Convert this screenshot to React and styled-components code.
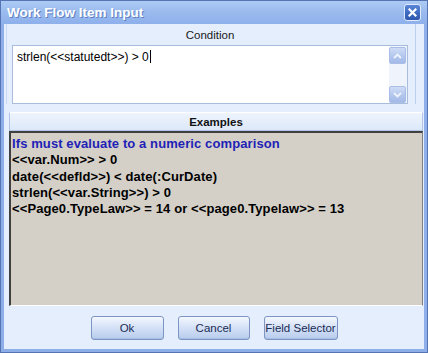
import React from "react";
import styled, { createGlobalStyle } from "styled-components";

const GlobalStyle = createGlobalStyle`
  html, body {
    margin: 0;
    padding: 0;
    background: #ffffff;
  }
  * {
    box-sizing: border-box;
  }
`;

const examples = [
  { text: "Ifs must evaluate to a numeric comparison", note: true },
  { text: "<<var.Num>> > 0" },
  { text: "date(<<defld>>) < date(:CurDate)" },
  { text: "strlen(<<var.String>>) > 0" },
  { text: "<<Page0.TypeLaw>> = 14 or <<page0.Typelaw>> = 13" },
];

function App() {
  return (
    <>
      <GlobalStyle />
      <Window>
        <TitleBar>
          <Title>Work Flow Item Input</Title>
          <CloseButton aria-label="Close">
            <svg width="9" height="9" viewBox="0 0 9 9">
              <path
                d="M1.5 1.5 L7.5 7.5 M7.5 1.5 L1.5 7.5"
                stroke="#ffffff"
                strokeWidth="2.2"
                strokeLinecap="square"
              />
            </svg>
          </CloseButton>
        </TitleBar>

        <Content>
          <ConditionGroup>
            <GroupLabel>Condition</GroupLabel>
            <TextBox>
              <TextValue>
                strlen(&lt;&lt;statutedt&gt;&gt;) &gt; 0<Caret />
              </TextValue>
              <ScrollColumn>
                <ScrollButton>
                  <svg width="9" height="6" viewBox="0 0 9 6">
                    <path d="M1 5 L4.5 1.5 L8 5" fill="none" stroke="#eef3fc" strokeWidth="1.8" />
                  </svg>
                </ScrollButton>
                <ScrollButton>
                  <svg width="9" height="6" viewBox="0 0 9 6">
                    <path d="M1 1 L4.5 4.5 L8 1" fill="none" stroke="#eef3fc" strokeWidth="1.8" />
                  </svg>
                </ScrollButton>
              </ScrollColumn>
            </TextBox>
          </ConditionGroup>

          <ExamplesSection>
            <ExamplesHeader>Examples</ExamplesHeader>
            <ExamplesBody>
              {examples.map((line) => (
                <ExampleLine key={line.text} $note={line.note}>
                  {line.text}
                </ExampleLine>
              ))}
            </ExamplesBody>
          </ExamplesSection>

          <Footer>
            <DialogButton $width={73}>Ok</DialogButton>
            <DialogButton $width={72}>Cancel</DialogButton>
            <DialogButton $width={74}>Field Selector</DialogButton>
          </Footer>
        </Content>
      </Window>
    </>
  );
}

export default App;

const Window = styled.div`
  width: 428px;
  height: 353px;
  display: flex;
  flex-direction: column;
  border: 1px solid #5574b4;
  background: #e4eefc;
  font-family: "Liberation Sans", Arial, sans-serif;
`;

const TitleBar = styled.div`
  height: 23px;
  flex: none;
  display: flex;
  align-items: center;
  justify-content: space-between;
  padding: 0 6px 0 6px;
  background: linear-gradient(to bottom, #aecbf5 0%, #9bbbee 45%, #8eb0eb 100%);
`;

const Title = styled.div`
  color: #ffffff;
  font-weight: bold;
  font-size: 13.5px;
  text-shadow: 1px 1px 0 #5d7fc0;
`;

const CloseButton = styled.div`
  width: 17px;
  height: 17px;
  display: flex;
  align-items: center;
  justify-content: center;
  border: 1px solid #dfe9fb;
  border-radius: 3px;
  background: linear-gradient(to bottom, #5b86d6 0%, #3a66c0 60%, #2f58ae 100%);
`;

const Content = styled.div`
  flex: 1;
  display: flex;
  flex-direction: column;
  border: 3px solid #8eaeea;
  border-top: none;
  background: #e4eefc;
`;

const ConditionGroup = styled.div`
  margin: 0 8px 0 2px;
  padding: 0 7px 0 5px;
  border-right: 1px solid #bccfee;
  border-left: 1px solid #c8d8f2;
`;

const GroupLabel = styled.div`
  height: 21px;
  display: flex;
  align-items: center;
  justify-content: center;
  font-size: 11.5px;
  color: #1a1a1a;
`;

const TextBox = styled.div`
  height: 59px;
  display: flex;
  background: #ffffff;
  border: 1px solid #a8bcdc;
`;

const TextValue = styled.div`
  flex: 1;
  padding: 4px 0 0 4px;
  font-size: 12px;
  color: #000000;
  line-height: 14px;
`;

const Caret = styled.span`
  display: inline-block;
  width: 1px;
  height: 13px;
  margin-left: 1px;
  vertical-align: -2px;
  background: #000000;
`;

const ScrollColumn = styled.div`
  width: 18px;
  display: flex;
  flex-direction: column;
  justify-content: space-between;
  padding: 1px 1px 0 0;
  background: #eef3fc;
`;

const ScrollButton = styled.div`
  width: 17px;
  height: 17px;
  display: flex;
  align-items: center;
  justify-content: center;
  border-radius: 2px;
  border: 1px solid #a9bde6;
  background: linear-gradient(to bottom, #cfdcf6 0%, #b3c7ee 55%, #a3bae8 100%);
`;

const ExamplesSection = styled.div`
  flex: 1;
  display: flex;
  flex-direction: column;
  margin: 8px 1px 0 5px;
`;

const ExamplesHeader = styled.div`
  height: 19px;
  flex: none;
  display: flex;
  align-items: center;
  justify-content: center;
  font-size: 11.5px;
  font-weight: bold;
  color: #111111;
  background: linear-gradient(to bottom, #eef4fd, #dce8f9);
  border: 1px solid #b2c5e6;
  border-top-color: #ffffff;
`;

const ExamplesBody = styled.div`
  flex: 1;
  padding: 3px 0 0 1px;
  background: #d4d0c8;
  border-top: 2px solid #404040;
  border-left: 2px solid #404040;
  border-right: 1px solid #808080;
  border-bottom: 1px solid #ffffff;
`;

const ExampleLine = styled.div`
  font-size: 13px;
  font-weight: bold;
  line-height: 16.3px;
  letter-spacing: 0.1px;
  color: ${(p) => (p.$note ? "#1f22b6" : "#000000")};
  white-space: nowrap;
`;

const Footer = styled.div`
  height: 43px;
  flex: none;
  display: flex;
  align-items: center;
  justify-content: center;
  gap: 14px;
  padding-top: 1px;
`;

const DialogButton = styled.div`
  width: ${(p) => p.$width}px;
  height: 24px;
  display: flex;
  align-items: center;
  justify-content: center;
  font-size: 11.5px;
  color: #1b2c55;
  border: 1px solid #7d95c2;
  border-radius: 3px;
  background: linear-gradient(to bottom, #f4f8fe 0%, #d6e2f7 45%, #b8ccee 100%);
  box-shadow: inset 0 -1px 0 #a8bde3;
`;
